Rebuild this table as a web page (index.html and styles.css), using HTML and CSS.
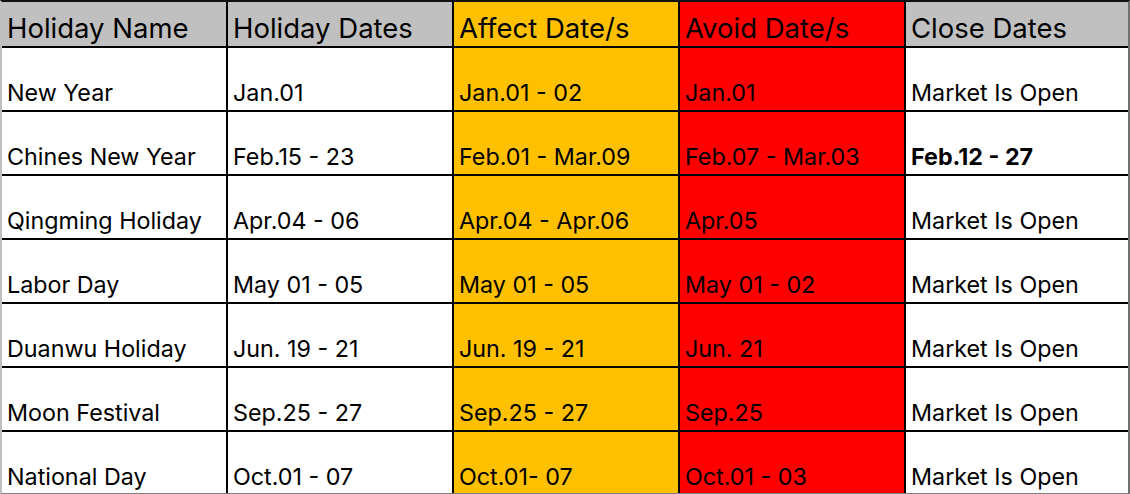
FILE: index.html
```html
<!DOCTYPE html>
<html>
<head>
<meta charset="utf-8">
<link rel="stylesheet" href="styles.css">
</head>
<body>
<div class="sheet">
  <div class="c hd gray">Holiday Name</div>
  <div class="c hd gray">Holiday Dates</div>
  <div class="c hd yellow">Affect Date/s</div>
  <div class="c hd red">Avoid Date/s</div>
  <div class="c hd gray">Close Dates</div>

  <div class="c">New Year</div>
  <div class="c">Jan.01</div>
  <div class="c yellow">Jan.01 - 02</div>
  <div class="c red">Jan.01</div>
  <div class="c">Market Is Open</div>

  <div class="c">Chines New Year</div>
  <div class="c">Feb.15 - 23</div>
  <div class="c yellow">Feb.01 - Mar.09</div>
  <div class="c red">Feb.07 - Mar.03</div>
  <div class="c bold">Feb.12 - 27</div>

  <div class="c">Qingming Holiday</div>
  <div class="c">Apr.04 - 06</div>
  <div class="c yellow">Apr.04 - Apr.06</div>
  <div class="c red">Apr.05</div>
  <div class="c">Market Is Open</div>

  <div class="c">Labor Day</div>
  <div class="c">May 01 - 05</div>
  <div class="c yellow">May 01 - 05</div>
  <div class="c red">May 01 - 02</div>
  <div class="c">Market Is Open</div>

  <div class="c">Duanwu Holiday</div>
  <div class="c">Jun. 19 - 21</div>
  <div class="c yellow">Jun. 19 - 21</div>
  <div class="c red">Jun. 21</div>
  <div class="c">Market Is Open</div>

  <div class="c">Moon Festival</div>
  <div class="c">Sep.25 - 27</div>
  <div class="c yellow">Sep.25 - 27</div>
  <div class="c red">Sep.25</div>
  <div class="c">Market Is Open</div>

  <div class="c">National Day</div>
  <div class="c">Oct.01 - 07</div>
  <div class="c yellow">Oct.01- 07</div>
  <div class="c red">Oct.01 - 03</div>
  <div class="c">Market Is Open</div>
</div>
</body>
</html>
```
FILE: styles.css
```css
html, body {
  margin: 0;
  padding: 0;
  background: #ffffff;
}
.sheet {
  box-sizing: border-box;
  width: 1130px;
  height: 494px;
  overflow: hidden;
  display: grid;
  grid-template-columns: 224px 224px 224px 224px 222px;
  grid-template-rows: 44px repeat(7, 62px);
  gap: 2px;
  background: #000000;
  border-top: 2px solid #111111;
  border-left: 2px solid #c0c0c0;
  border-right: 2px solid #707070;
  border-bottom: 1px solid #808080;
  font-family: "Inter", "Liberation Sans", sans-serif;
  color: #000000;
}
.c {
  background: #ffffff;
  display: flex;
  align-items: flex-end;
  padding: 0 0 3px 5px;
  font-size: 23.3px;
  line-height: 1.2;
  white-space: nowrap;
  overflow: hidden;
}
.hd {
  font-size: 27.5px;
  padding-bottom: 1px;
}
.gray { background: #c0c0c0; }
.yellow { background: #ffc000; }
.red { background: #ff0000; }
.bold { font-weight: 700; }
```
